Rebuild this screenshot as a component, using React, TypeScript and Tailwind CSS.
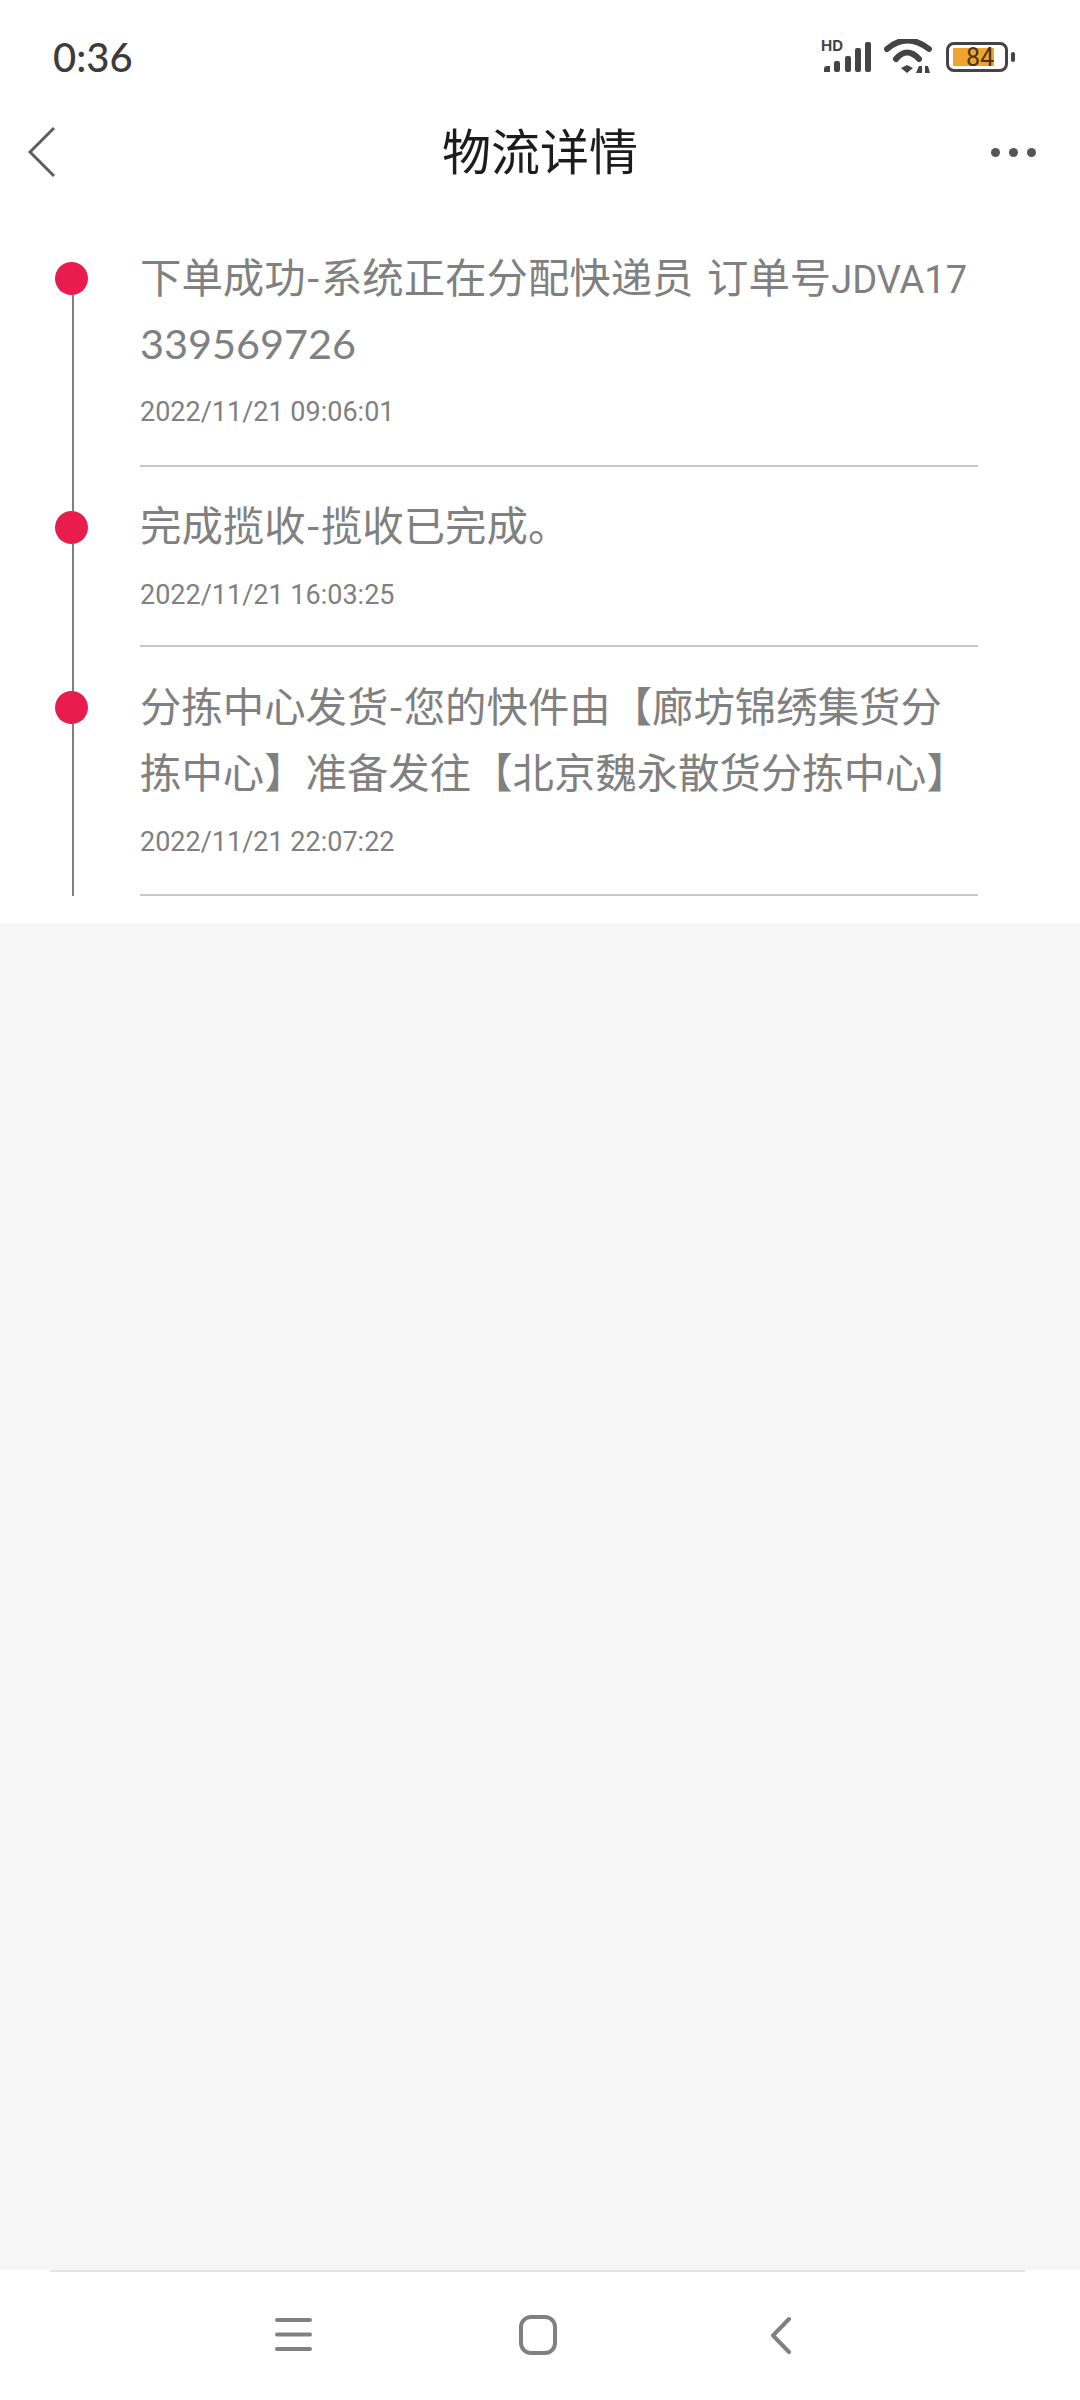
import type { ReactNode } from "react";

const LatinSpan = ({ children }: { children: ReactNode }) => (
  <span className="text-[38px] leading-none font-['Roboto',sans-serif]">{children}</span>
);

const items = [
  {
    title: (
      <>
        下单成功-系统正在分配快递员<span className="ml-[3px]"> </span>订单号<LatinSpan>JDVA17</LatinSpan>339569726
      </>
    ),
    date: "2022/11/21 09:06:01",
    first: true,
    box: "pt-[26px] pb-[33px]",
    gap: "mt-[16px]",
  },
  {
    title: "完成揽收-揽收已完成。",
    date: "2022/11/21 16:03:25",
    first: false,
    box: "pt-[25px] pb-[30px]",
    gap: "mt-[17px]",
  },
  {
    title: "分拣中心发货-您的快件由【廊坊锦绣集货分拣中心】准备发往【北京魏永散货分拣中心】",
    date: "2022/11/21 22:07:22",
    first: false,
    box: "pt-[26px] pb-[32px]",
    gap: "mt-[17px]",
  },
];

function SignalIcon() {
  return (
    <div className="relative w-[52px] h-[36px]">
      <span className="absolute left-0 top-[-1px] text-[15px] leading-[16px] font-bold text-[#444] font-['Inter',sans-serif]">HD</span>
      <svg width="52" height="36" viewBox="822 40 52 36" className="block">
        <path d="M825 73v-3a3 3 0 0 1 3-3h3v6z" fill="#444" />
        <rect x="835" y="62" width="6" height="11" rx="2" fill="#444" />
        <rect x="846" y="57" width="6" height="16" rx="2" fill="#444" />
        <rect x="856" y="49" width="6" height="24" rx="2" fill="#444" />
        <rect x="866" y="43" width="6" height="30" rx="2" fill="#444" />
      </svg>
    </div>
  );
}

function WifiIcon() {
  return (
    <svg width="50" height="36" viewBox="885 40 50 36" className="block">
      <path d="M888 50Q908 33 930 50" fill="none" stroke="#444" strokeWidth="6" strokeLinecap="round" />
      <path d="M897 60Q908 47 920 60" fill="none" stroke="#444" strokeWidth="6" strokeLinecap="round" />
      <path d="M902 69L908 66L914 69L908 74z" fill="#444" />
      <path d="M917 74l3-7 3 0 0 7zM926 67h3l2 7h-5z" fill="#444" />
    </svg>
  );
}

function Battery() {
  return (
    <div className="flex items-center">
      <div className="w-[62px] h-[30px] rounded-[8px] border-[3px] border-[#444] flex items-center pl-[4px]">
        <div className="w-[41px] h-[18px] bg-[#f0a430] flex items-center justify-end text-[25px] leading-none text-[#4a3415] font-['Roboto',sans-serif]">84</div>
      </div>
      <div className="w-[4px] h-[10px] ml-[3px] rounded-[2px] bg-[#444]" />
    </div>
  );
}

export default function App() {
  return (
    <div className="w-[1080px] h-[2400px] flex flex-col bg-[#f6f6f6] font-['Noto_Sans_CJK_SC',sans-serif]">
      <div className="bg-white">
        <div className="h-[110px] pt-[4px] flex items-center justify-between pl-[53px] pr-[65px]">
          <span className="text-[40px] leading-none text-[#3c3c3c] font-['Lato','Noto_Sans_CJK_SC',sans-serif] font-medium">0:36</span>
          <div className="flex items-center">
            <SignalIcon />
            <div className="ml-[11px] mr-[12px]">
              <WifiIcon />
            </div>
            <Battery />
          </div>
        </div>
        <div className="h-[84px] flex items-center justify-between relative pl-[28px] pr-[44px]">
          <svg width="30" height="52" viewBox="28 126 30 52" className="block">
            <path d="M54 128L30 152L54 176" fill="none" stroke="#5c5c5c" strokeWidth="3" />
          </svg>
          <h1 className="absolute left-0 right-0 -top-[3px] text-center text-[49px] leading-[84px] text-[#1c1c1c] font-normal">物流详情</h1>
          <div className="flex gap-[9px]">
            <div className="w-[9px] h-[9px] rounded-full bg-[#555]" />
            <div className="w-[9px] h-[9px] rounded-full bg-[#555]" />
            <div className="w-[9px] h-[9px] rounded-full bg-[#555]" />
          </div>
        </div>
        <div className="pt-[24px] pb-[27px]">
          {items.map((it) => (
            <div key={it.date} className="flex">
              <div className="w-[140px] shrink-0 flex flex-col pl-[55px]">
                <div className={"w-[2px] h-[44px] ml-[17px] " + (it.first ? "bg-transparent" : "bg-[#808080]")} />
                <div className="w-[33px] h-[33px] rounded-full bg-[#e91c4e] shrink-0" />
                <div className="w-[2px] flex-1 ml-[17px] bg-[#808080]" />
              </div>
              <div className={"w-[838px] border-b-2 border-[#c8c8c8] " + it.box}>
                <div className="text-[41.4px] leading-[66px] text-[#808080] font-normal break-all font-['Lato','Noto_Sans_CJK_SC',sans-serif]">{it.title}</div>
                <div className={"text-[27px] leading-[40px] text-[#808080] font-['Roboto',sans-serif] " + it.gap}>{it.date}</div>
              </div>
            </div>
          ))}
        </div>
      </div>
      <div className="flex-1" />
      <div className="h-[130px] bg-white">
        <div className="ml-[50px] mr-[55px] border-t-2 border-[#e4e4e4]" />
        <div className="h-[128px] flex items-center pl-[170px] pb-[2px]">
          <div className="w-[245px] flex justify-center">
            <svg width="40" height="36" viewBox="272 2318 40 36">
              <path d="M276 2321H309M276 2335.5H309M276 2350H309" stroke="#808080" strokeWidth="4" strokeLinecap="round" fill="none" />
            </svg>
          </div>
          <div className="w-[245px] flex justify-center">
            <svg width="40" height="40" viewBox="517 2315 40 40">
              <rect x="520" y="2317" width="34" height="36" rx="10" stroke="#808080" strokeWidth="4" fill="none" />
            </svg>
          </div>
          <div className="w-[245px] flex justify-center">
            <svg width="24" height="38" viewBox="771 2316 24 38">
              <path d="M789 2319L773 2335.5L789 2352" stroke="#808080" strokeWidth="4" strokeLinecap="round" strokeLinejoin="round" fill="none" />
            </svg>
          </div>
        </div>
      </div>
    </div>
  );
}
